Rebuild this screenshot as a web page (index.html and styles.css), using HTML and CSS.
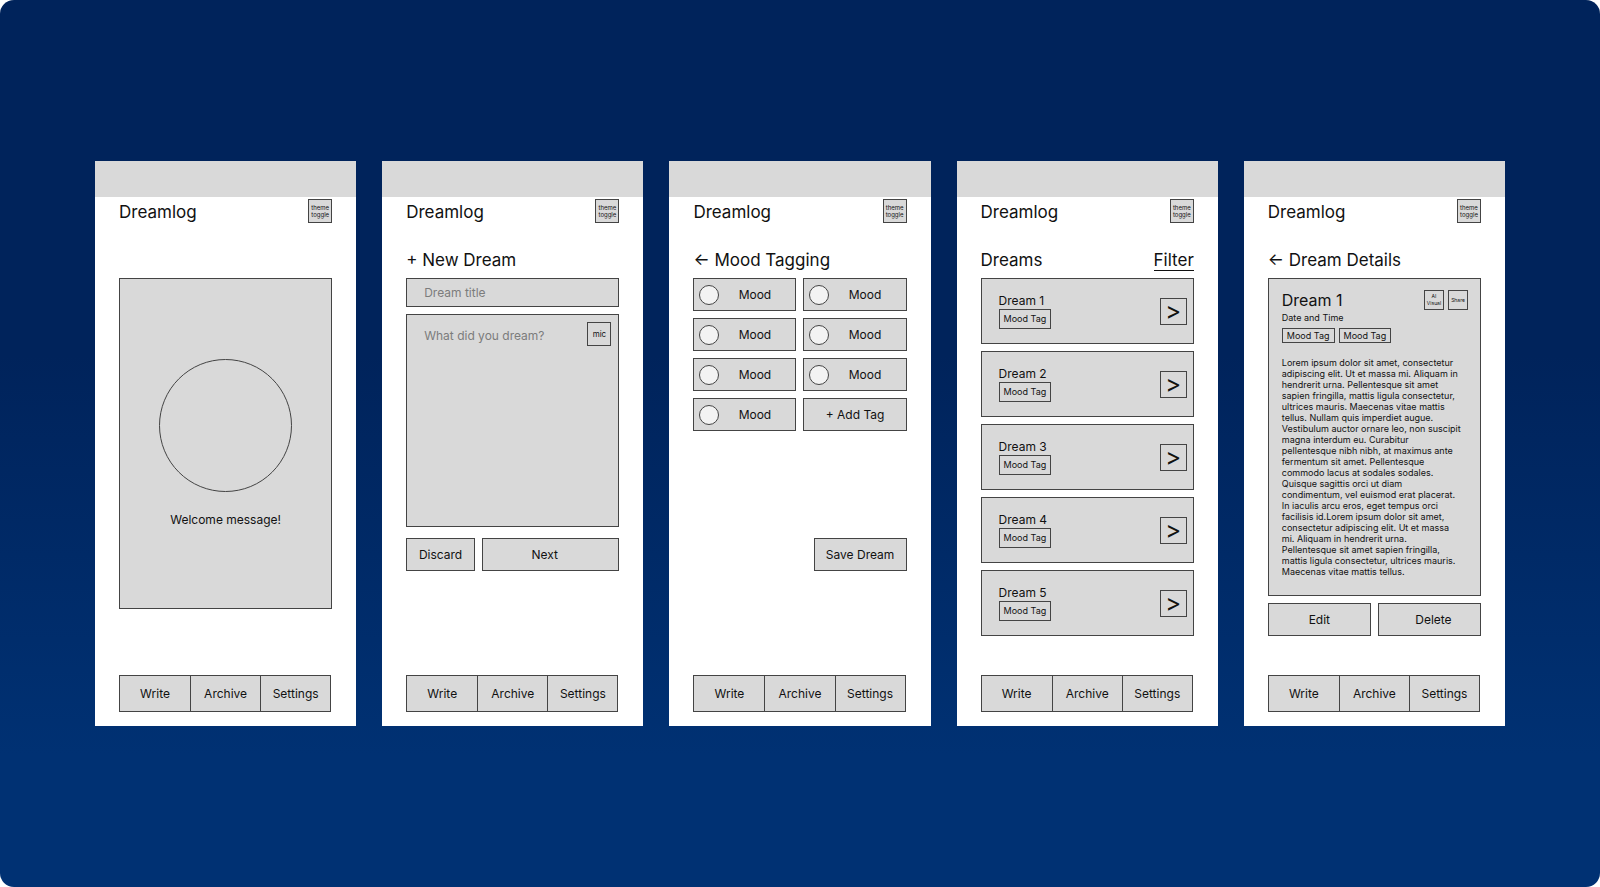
FILE: index.html
```
<!DOCTYPE html>
<html lang="en">
<head>
    <meta charset="UTF-8">
    <meta name="viewport" content="width=device-width, initial-scale=1.0">
    <title>Dreamlog wireframes</title>
    <link rel="stylesheet" href="styles.css">
</head>
<body>
    <main class="board">
        <!-- Home -->
        <section class="screen">
            <div class="status-bar"></div>
            <header class="app-header">
                <h1>Dreamlog</h1>
                <button class="theme-toggle">theme toggle</button>
            </header>
            <div class="content">
                <div class="title-row"></div>
                <div class="welcome">
                    <div class="welcome-circle"></div>
                    <p>Welcome message!</p>
                </div>
            </div>
            <nav class="tabs">
                <a href="#write">Write</a>
                <a href="#archive">Archive</a>
                <a href="#settings">Settings</a>
            </nav>
        </section>

        <!-- New dream -->
        <section class="screen">
            <div class="status-bar"></div>
            <header class="app-header">
                <h1>Dreamlog</h1>
                <button class="theme-toggle">theme toggle</button>
            </header>
            <div class="content">
                <div class="title-row">
                    <h2>+ New Dream</h2>
                </div>
                <input class="dream-title" type="text" placeholder="Dream title" aria-label="Dream title">
                <div class="dream-entry">
                    <textarea placeholder="What did you dream?" aria-label="What did you dream?"></textarea>
                    <button class="mic">mic</button>
                </div>
                <div class="actions actions-write">
                    <button class="btn">Discard</button>
                    <button class="btn btn-next">Next</button>
                </div>
            </div>
            <nav class="tabs">
                <a href="#write">Write</a>
                <a href="#archive">Archive</a>
                <a href="#settings">Settings</a>
            </nav>
        </section>

        <!-- Mood tagging -->
        <section class="screen">
            <div class="status-bar"></div>
            <header class="app-header">
                <h1>Dreamlog</h1>
                <button class="theme-toggle">theme toggle</button>
            </header>
            <div class="content">
                <div class="title-row">
                    <h2><a href="#write" aria-label="Back">←</a> Mood Tagging</h2>
                </div>
                <div class="moods">
                    <label class="mood"><input type="checkbox"><span>Mood</span></label>
                    <label class="mood"><input type="checkbox"><span>Mood</span></label>
                    <label class="mood"><input type="checkbox"><span>Mood</span></label>
                    <label class="mood"><input type="checkbox"><span>Mood</span></label>
                    <label class="mood"><input type="checkbox"><span>Mood</span></label>
                    <label class="mood"><input type="checkbox"><span>Mood</span></label>
                    <label class="mood"><input type="checkbox"><span>Mood</span></label>
                    <button class="btn">+ Add Tag</button>
                </div>
                <div class="actions actions-save">
                    <button class="btn">Save Dream</button>
                </div>
            </div>
            <nav class="tabs">
                <a href="#write">Write</a>
                <a href="#archive">Archive</a>
                <a href="#settings">Settings</a>
            </nav>
        </section>

        <!-- Archive -->
        <section class="screen">
            <div class="status-bar"></div>
            <header class="app-header">
                <h1>Dreamlog</h1>
                <button class="theme-toggle">theme toggle</button>
            </header>
            <div class="content">
                <div class="title-row">
                    <h2>Dreams</h2>
                    <a class="filter" href="#filter">Filter</a>
                </div>
                <div class="dream-list">
                    <article class="dream-card">
                        <div>
                            <h3>Dream 1</h3>
                            <span class="tag">Mood Tag</span>
                        </div>
                        <button class="open" aria-label="Open Dream 1">&gt;</button>
                    </article>
                    <article class="dream-card">
                        <div>
                            <h3>Dream 2</h3>
                            <span class="tag">Mood Tag</span>
                        </div>
                        <button class="open" aria-label="Open Dream 2">&gt;</button>
                    </article>
                    <article class="dream-card">
                        <div>
                            <h3>Dream 3</h3>
                            <span class="tag">Mood Tag</span>
                        </div>
                        <button class="open" aria-label="Open Dream 3">&gt;</button>
                    </article>
                    <article class="dream-card">
                        <div>
                            <h3>Dream 4</h3>
                            <span class="tag">Mood Tag</span>
                        </div>
                        <button class="open" aria-label="Open Dream 4">&gt;</button>
                    </article>
                    <article class="dream-card">
                        <div>
                            <h3>Dream 5</h3>
                            <span class="tag">Mood Tag</span>
                        </div>
                        <button class="open" aria-label="Open Dream 5">&gt;</button>
                    </article>
                </div>
            </div>
            <nav class="tabs">
                <a href="#write">Write</a>
                <a href="#archive">Archive</a>
                <a href="#settings">Settings</a>
            </nav>
        </section>

        <!-- Dream details -->
        <section class="screen">
            <div class="status-bar"></div>
            <header class="app-header">
                <h1>Dreamlog</h1>
                <button class="theme-toggle">theme toggle</button>
            </header>
            <div class="content">
                <div class="title-row">
                    <h2><a href="#archive" aria-label="Back">←</a> Dream Details</h2>
                </div>
                <article class="details">
                    <div class="details-head">
                        <h3>Dream 1</h3>
                        <button class="mini">AI Visual</button>
                        <button class="mini">Share</button>
                    </div>
                    <p class="date">Date and Time</p>
                    <div class="tags">
                        <span class="tag">Mood Tag</span>
                        <span class="tag">Mood Tag</span>
                    </div>
                    <p class="dream-text">Lorem ipsum dolor sit amet, consectetur adipiscing elit. Ut et massa mi. Aliquam in hendrerit urna. Pellentesque sit amet sapien fringilla, mattis ligula consectetur, ultrices mauris. Maecenas vitae mattis tellus. Nullam quis imperdiet augue. Vestibulum auctor ornare leo, non suscipit magna interdum eu. Curabitur pellentesque nibh nibh, at maximus ante fermentum sit amet. Pellentesque commodo lacus at sodales sodales. Quisque sagittis orci ut diam condimentum, vel euismod erat placerat. In iaculis arcu eros, eget tempus orci facilisis id.Lorem ipsum dolor sit amet, consectetur adipiscing elit. Ut et massa mi. Aliquam in hendrerit urna. Pellentesque sit amet sapien fringilla, mattis ligula consectetur, ultrices mauris. Maecenas vitae mattis tellus.</p>
                </article>
                <div class="actions actions-details">
                    <button class="btn">Edit</button>
                    <button class="btn btn-delete">Delete</button>
                </div>
            </div>
            <nav class="tabs">
                <a href="#write">Write</a>
                <a href="#archive">Archive</a>
                <a href="#settings">Settings</a>
            </nav>
        </section>
    </main>
</body>
</html>
```
FILE: styles.css
```
:root {
    --fill: #d9d9d9;
    --line: #444444;
    --text: #111111;
    --placeholder: #7c7c7c;
}

* {
    box-sizing: border-box;
}

body {
    margin: 0;
    background: #ffffff;
    color: var(--text);
    font-family: Inter, "Liberation Sans", sans-serif;
    font-size: 12px;
    line-height: 16px;
}

h1, h2, h3, p {
    margin: 0;
    font-weight: 400;
}

h1, h2 {
    font-size: 17px;
    line-height: 26px;
}

a {
    color: inherit;
    text-decoration: none;
}

button, input, textarea {
    margin: 0;
    padding: 0;
    border: 1px solid var(--line);
    border-radius: 0;
    background: var(--fill);
    color: inherit;
    font: inherit;
}

button {
    cursor: pointer;
}

.board {
    min-height: 100vh;
    padding: 24px 95px;
    border-radius: 14px;
    background: linear-gradient(#00235b 0%, #00235b 40%, #003173 85%);
    display: grid;
    grid-template-columns: repeat(5, minmax(0, 1fr));
    gap: 26px;
    align-content: center;
}

.screen {
    background: #ffffff;
    display: flex;
    flex-direction: column;
    padding-bottom: 14px;
}

.status-bar {
    height: 36px;
    background: var(--fill);
}

.app-header {
    display: flex;
    justify-content: space-between;
    align-items: flex-start;
    padding: 2px 24px 0;
}

.theme-toggle {
    width: 24px;
    height: 24px;
    font-size: 6px;
    line-height: 7px;
}

.content {
    padding: 22px 24px 39px;
}

.title-row {
    display: flex;
    justify-content: space-between;
    height: 24px;
    margin-bottom: 7px;
}

.filter {
    height: 24px;
    border-bottom: 1px solid var(--text);
    font-size: 17px;
    line-height: 26px;
}

.btn {
    height: 33px;
}

.actions {
    display: grid;
    gap: 7px;
}

/* home */
.welcome {
    height: 331px;
    padding-top: 80px;
    border: 1px solid var(--line);
    background: var(--fill);
    text-align: center;
}

.welcome-circle {
    width: 133px;
    height: 133px;
    margin: 0 auto 20px;
    border: 1px solid var(--line);
    border-radius: 50%;
}

/* new dream */
.dream-title {
    display: block;
    width: 100%;
    height: 29px;
    margin-bottom: 7px;
    padding: 0 17px;
}

.dream-entry {
    position: relative;
}

.dream-entry textarea {
    display: block;
    width: 100%;
    height: 213px;
    padding: 13px 48px 13px 17px;
    resize: none;
}

::placeholder {
    color: var(--placeholder);
    opacity: 1;
}

.mic {
    position: absolute;
    top: 8px;
    right: 8px;
    width: 24px;
    height: 24px;
    font-size: 8px;
    line-height: 10px;
}

.actions-write {
    grid-template-columns: 1fr 2fr;
    margin-top: 11px;
}

.btn-next {
    padding-right: 12px;
}

/* mood tagging */
.moods {
    display: grid;
    grid-template-columns: 1fr 1fr;
    gap: 7px;
}

.mood {
    height: 33px;
    padding: 0 5px;
    border: 1px solid var(--line);
    background: var(--fill);
    display: flex;
    align-items: center;
}

.mood input {
    appearance: none;
    width: 20px;
    height: 20px;
    border-radius: 50%;
    background: #f3f3f3;
}

.mood input:checked {
    background: var(--line);
}

.mood span {
    flex: 1;
    text-align: center;
}

.actions-save {
    grid-template-columns: 93px;
    justify-content: end;
    margin-top: 107px;
}

/* archive */
.dream-list {
    display: grid;
    gap: 7px;
}

.dream-card {
    height: 66px;
    padding: 0 6px 0 17px;
    border: 1px solid var(--line);
    background: var(--fill);
    display: flex;
    justify-content: space-between;
    align-items: center;
}

.dream-card h3 {
    font-size: 12px;
    line-height: 16px;
}

.tag {
    display: block;
    padding: 0 4px;
    border: 1px solid var(--line);
    font-size: 9px;
    line-height: 18px;
}

.open {
    width: 27px;
    height: 27px;
    padding-bottom: 2px;
    font-size: 24px;
    line-height: 23px;
}

/* dream details */
.details {
    height: 318px;
    padding: 11px 12px 0 13px;
    border: 1px solid var(--line);
    background: var(--fill);
}

.details-head {
    display: flex;
    gap: 4px;
}

.details-head h3 {
    flex: 1;
    font-size: 16px;
    line-height: 20px;
}

.mini {
    width: 20px;
    height: 20px;
    font-size: 5px;
    line-height: 7px;
}

.date {
    margin: 2px 0 4px;
    font-size: 9px;
    line-height: 12px;
}

.tags {
    display: flex;
    gap: 4px;
    margin-bottom: 14px;
}

.tags .tag {
    line-height: 13px;
}

.dream-text {
    padding-right: 5px;
    font-size: 9px;
    line-height: 11px;
}

.actions-details {
    grid-template-columns: 1fr 1fr;
    margin-top: 7px;
}

.btn-delete {
    padding-left: 8px;
}

/* bottom navigation */
.tabs {
    margin: auto 25px 0 24px;
    border: 1px solid var(--line);
    background: var(--fill);
    display: grid;
    grid-template-columns: repeat(3, 1fr);
}

.tabs a {
    line-height: 35px;
    text-align: center;
}

.tabs a + a {
    border-left: 1px solid var(--line);
}

@media (max-width: 1300px) {
    .board {
        padding: 24px;
        grid-template-columns: repeat(auto-fit, minmax(261px, 1fr));
    }
}
```
